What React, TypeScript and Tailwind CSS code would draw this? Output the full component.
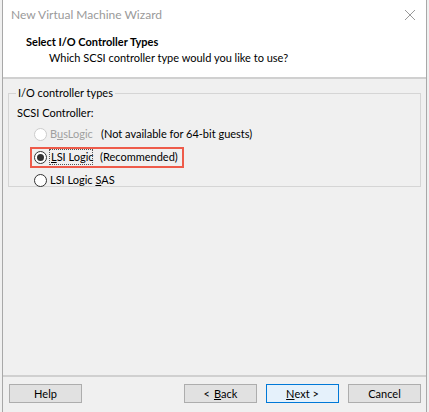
import React from 'react'

const Radio = ({ checked, disabled }: { checked?: boolean; disabled?: boolean }) => (
  <span
    className={`w-[13px] h-[13px] rounded-full border flex items-center justify-center shrink-0 bg-white ${
      disabled ? 'border-[#cccccc]' : 'border-[#333333]'
    }`}
  >
    {checked && <span className="w-[7px] h-[7px] rounded-full bg-[#333333]" />}
  </span>
)

const Button = ({ children, primary }: { children: React.ReactNode; primary?: boolean }) => (
  <button
    className={`w-[73px] h-[19px] border text-[11px] leading-none text-black flex items-center justify-center whitespace-nowrap ${
      primary ? 'bg-[#e5f1fb] border-[#0078d7]' : 'bg-[#e1e1e1] border-[#adadad]'
    }`}
  >
    {children}
  </button>
)

const App = () => {
  return (
    <div
      className="w-[429px] h-[412px] bg-[#f0f0f0] flex text-black overflow-hidden"
      style={{ fontFamily: '"Segoe UI", Lato, "Liberation Sans", Arial, sans-serif' }}
    >
      <div className="ml-[2px] w-[425px] h-full border-l border-r border-[#a8a8a8] flex flex-col">
        {/* title bar */}
        <div className="h-[29px] bg-white flex items-center justify-between pl-[8px] pr-[8px] shrink-0">
          <span className="text-[12px] text-[#9a9a9a]">New Virtual Machine Wizard</span>
          <svg width="12" height="12" viewBox="0 0 12 12" className="mr-[2px]">
            <path d="M1 1L11 11M11 1L1 11" stroke="#9a9a9a" strokeWidth="1" />
          </svg>
        </div>

        {/* header */}
        <div className="h-[48px] bg-white shrink-0 pl-[23px] pt-[5px]">
          <div className="text-[11px] font-bold leading-[16px]">Select I/O Controller Types</div>
          <div className="text-[11px] leading-[16px] pl-[23px]">Which SCSI controller type would you like to use?</div>
        </div>
        <div className="h-[2px] bg-[#d0d0d0] shrink-0" />

        {/* body */}
        <div className="flex-1 pt-[6px] pl-[5px] pr-[5px]">
          <fieldset className="border border-[#d5d5d5] h-[102px] px-[8px]">
            <legend className="text-[11px] px-[2px] -ml-[1px]">I/O controller types</legend>
            <div className="text-[11px] leading-[16px] mt-[3px]">SCSI Controller:</div>
            <div className="flex flex-col mt-[2px] pl-[17px] whitespace-nowrap text-[11px]">
              <div className="h-[23px] flex items-center">
                <Radio disabled />
                <span className="ml-[3px] text-[#a0a0a0] w-[51px]">
                  B<span className="underline">u</span>sLogic
                </span>
                <span>(Not available for 64-bit guests)</span>
              </div>
              <div className="h-[23px] flex items-center -ml-[4px]">
                <div className="flex items-center h-[21px] border-2 border-[#ee5b4a] pl-[2px] pr-[4px]">
                  <Radio checked />
                  <span className="ml-[2px] border border-dotted border-[#555] pl-[1px] leading-[14px] w-[44px]">
                    <span className="underline">L</span>SI Logic
                  </span>
                  <span className="ml-[7px]">(Recommended)</span>
                </div>
              </div>
              <div className="h-[23px] flex items-center">
                <Radio />
                <span className="ml-[3px]">
                  LSI Logic <span className="underline">S</span>AS
                </span>
              </div>
            </div>
          </fieldset>
        </div>

        {/* footer */}
        <div className="h-[2px] bg-[#d0d0d0] shrink-0" />
        <div className="h-[35px] shrink-0 flex items-start pt-[7px] pl-[6px] pr-[5px]">
          <Button>Help</Button>
          <div className="flex-1" />
          <div className="flex gap-[9px]">
            <Button>
              &lt;<span className="underline ml-[4px]">B</span>ack
            </Button>
            <Button primary>
              <span className="underline">N</span>ext &gt;
            </Button>
            <Button>Cancel</Button>
          </div>
        </div>
      </div>
    </div>
  )
}

export default App
